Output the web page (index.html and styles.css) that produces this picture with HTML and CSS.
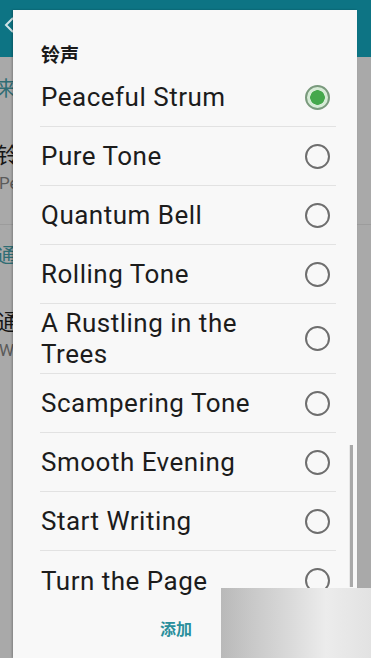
FILE: index.html
```html
<!DOCTYPE html>
<html lang="zh">
<head>
<meta charset="utf-8">
<link rel="stylesheet" href="styles.css">
</head>
<body>
<div class="screen">
  <div class="appbar">
    <svg class="back" width="20" height="24" viewBox="0 0 20 24"><path d="M11 5 L4 12 L11 19" fill="none" stroke="#cfe3e6" stroke-width="2"/></svg>
  </div>
  <div class="bg-list">
    <div class="bg-header h1">来电</div>
    <div class="bg-item i1"><div class="bg-title">铃声</div><div class="bg-sub">Peaceful Strum</div></div>
    <div class="bg-header h2">通知</div>
    <div class="bg-item i2"><div class="bg-title">通知</div><div class="bg-sub">Whistle</div></div>
  </div>

  <div class="dialog">
    <div class="dlg-title">铃声</div>
    <ul class="list">
      <li class="row"><span class="label">Peaceful Strum</span><span class="radio on"></span></li>
      <li class="row"><span class="label">Pure Tone</span><span class="radio"></span></li>
      <li class="row"><span class="label">Quantum Bell</span><span class="radio"></span></li>
      <li class="row"><span class="label">Rolling Tone</span><span class="radio"></span></li>
      <li class="row tall"><span class="label">A Rustling in the<br>Trees</span><span class="radio"></span></li>
      <li class="row"><span class="label">Scampering Tone</span><span class="radio"></span></li>
      <li class="row"><span class="label">Smooth Evening</span><span class="radio"></span></li>
      <li class="row"><span class="label">Start Writing</span><span class="radio"></span></li>
      <li class="row last"><span class="label">Turn the Page</span><span class="radio"></span></li>
    </ul>
    <div class="actions"><span class="btn">添加</span></div>
    <div class="scrollbar"></div>
  </div>
  <div class="mosaic"></div>
</div>
</body>
</html>
```
FILE: styles.css
```css
* { box-sizing: border-box; }
html, body { margin: 0; padding: 0; }
body { width: 371px; height: 658px; overflow: hidden; background: #a9a9a9; font-family: Roboto, "Noto Sans CJK SC", sans-serif; }
.screen { position: relative; width: 371px; height: 658px; overflow: hidden; background: #a9a9a9; }
.appbar { height: 57px; background: #0d7484; display: flex; align-items: center; padding-left: 2px; padding-bottom: 8px; }
.back { display: block; }
.bg-list { display: flex; flex-direction: column; }
.bg-header { font-size: 20px; line-height: 24px; color: #2f6d74; font-family: "Noto Sans CJK SC", sans-serif; text-indent: -4px; }
.h1 { margin-top: 19px; }
.i1 { margin-top: 40px; border-bottom: 1px solid #9c9c9c; padding-bottom: 30px; }
.bg-title { font-size: 22px; line-height: 26px; color: #161616; font-family: "Noto Sans CJK SC", sans-serif; text-indent: -3px; }
.bg-sub { font-size: 17px; line-height: 22px; color: #5a5a5a; margin-top: 6px; text-indent: -1px; }
.h2 { margin-top: 18px; }
.i2 { margin-top: 40px; }

.dialog { position: absolute; left: 13px; top: 10px; width: 344px; bottom: 0; background: #f8f8f8; box-shadow: -1px 0 2px rgba(0,0,0,0.25); display: flex; flex-direction: column; }
.dlg-title { padding: 34px 0 0 28px; height: 58px; font-family: "Noto Sans CJK SC", sans-serif; font-weight: 700; font-size: 19px; line-height: 20px; color: #1a1a1a; }
.list { list-style: none; margin: 0 21px 0 27px; padding: 0; }
.row { display: flex; align-items: center; justify-content: space-between; height: 59px; border-bottom: 1px solid #e2e2e2; padding: 0 6px 0 1px; }
.row.tall { height: 70px; }
.row.last { border-bottom: none; }
.label { font-size: 26px; line-height: 31px; color: #1c1c1c; letter-spacing: 0.5px; padding-top: 1px; }
.radio { width: 25px; height: 25px; border-radius: 50%; border: 2px solid #6e6e6e; flex: none; }
.radio.on { border-color: #7a9a7d; background: radial-gradient(circle, #45a84c 0 7px, #d6ecd6 7.5px); }
.actions { display: flex; justify-content: center; padding-top: 8px; padding-right: 18px; }
.btn { font-family: "Noto Sans CJK SC", sans-serif; font-size: 16px; font-weight: 700; color: #2a8f9c; line-height: 20px; }
.scrollbar { position: absolute; left: 336px; top: 435px; width: 4px; height: 142px; background: #a9a9a9; border-left: 1px solid #e8e8e8; }
.mosaic { position: absolute; left: 221px; top: 588px; width: 150px; height: 70px; background: linear-gradient(90deg, #b9b9b9 0, #c8c8c8 20%, #d9d9d9 45%, #ececec 70%, #e2e2e2 100%); }
```
